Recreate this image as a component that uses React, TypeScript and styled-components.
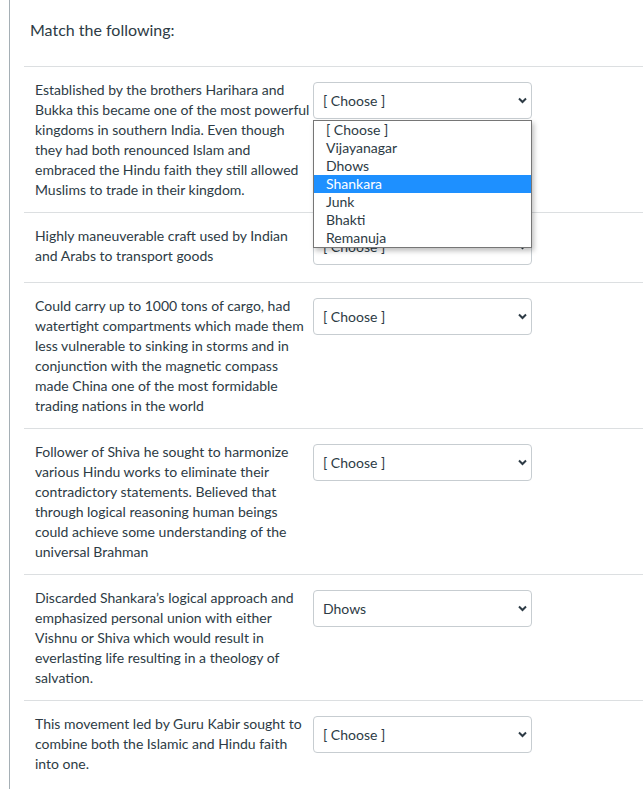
import React from "react";
import styled, { createGlobalStyle } from "styled-components";

const GlobalStyle = createGlobalStyle`
  html, body {
    margin: 0;
    padding: 0;
    background: #fff;
    overflow: hidden;
  }
  body {
    font-family: Lato, "Liberation Sans", sans-serif;
    color: #2d3b45;
  }
`;

const OPTIONS = ["[ Choose ]", "Vijayanagar", "Dhows", "Shankara", "Junk", "Bhakti", "Remanuja"];

interface Item {
  text: string;
  value: string;
  open?: boolean;
}

const ITEMS: Item[] = [
  {
    text: "Established by the brothers Harihara and Bukka this became one of the most powerful kingdoms in southern India. Even though they had both renounced Islam and embraced the Hindu faith they still allowed Muslims to trade in their kingdom.",
    value: "[ Choose ]",
    open: true,
  },
  {
    text: "Highly maneuverable craft used by Indian and Arabs to transport goods",
    value: "[ Choose ]",
  },
  {
    text: "Could carry up to 1000 tons of cargo, had watertight compartments which made them less vulnerable to sinking in storms and in conjunction with the magnetic compass made China one of the most formidable trading nations in the world",
    value: "[ Choose ]",
  },
  {
    text: "Follower of Shiva he sought to harmonize various Hindu works to eliminate their contradictory statements. Believed that through logical reasoning human beings could achieve some understanding of the universal Brahman",
    value: "[ Choose ]",
  },
  {
    text: "Discarded Shankara’s logical approach and emphasized personal union with either Vishnu or Shiva which would result in everlasting life resulting in a theology of salvation.",
    value: "Dhows",
  },
  {
    text: "This movement led by Guru Kabir sought to combine both the Islamic and Hindu faith into one.",
    value: "[ Choose ]",
  },
];

const Page = styled.div`
  margin-left: 9px;
  border-left: 1px solid #a5afb5;
  min-height: 789px;
  box-sizing: border-box;
`;

const Header = styled.div`
  padding: 20px 0 0 20px;
  height: 66px;
  box-sizing: border-box;
`;

const Title = styled.div`
  font-size: 16px;
  line-height: 20px;
  color: #2d3b45;
`;

const List = styled.div`
  margin-left: 14px;
`;

const Row = styled.div`
  display: flex;
  align-items: flex-start;
  border-top: 1px solid #dcdfe1;
  padding: 13px 0 12px 11px;
`;

const Question = styled.div`
  width: 278px;
  flex: none;
  font-size: 14px;
  line-height: 20px;
  color: #2d3b45;
`;

const SelectWrap = styled.div`
  position: relative;
  width: 219px;
  margin-top: 2px;
  margin-bottom: 5px;
`;

const Select = styled.select`
  appearance: none;
  -webkit-appearance: none;
  display: block;
  width: 219px;
  height: 37px;
  box-sizing: border-box;
  border: 1px solid #c7cdd1;
  border-radius: 4px;
  background: #fff;
  padding: 0 28px 0 9px;
  font-family: Lato, "Liberation Sans", sans-serif;
  font-size: 14px;
  color: #2d3b45;
  outline: none;
`;

const Chevron = styled.svg`
  position: absolute;
  right: 5px;
  top: 15px;
  width: 9px;
  height: 7px;
  pointer-events: none;
`;

const Menu = styled.ul`
  position: absolute;
  z-index: 5;
  top: 38px;
  left: 0;
  width: 219px;
  box-sizing: border-box;
  margin: 0;
  padding: 0;
  list-style: none;
  background: #fff;
  border: 1px solid #767676;
  box-shadow: 2px 3px 5px rgba(0, 0, 0, 0.25);
`;

const MenuItem = styled.li<{ $active?: boolean }>`
  height: 18px;
  line-height: 18px;
  padding-left: 12px;
  font-size: 14px;
  background: ${(p) => (p.$active ? "#1e90ff" : "#fff")};
  color: ${(p) => (p.$active ? "#fff" : "#2d3b45")};
`;

const Dropdown: React.FC<{ value: string; open?: boolean }> = ({ value, open }) => (
  <SelectWrap>
    <Select value={value} onChange={() => {}}>
      {OPTIONS.map((o) => (
        <option key={o} value={o}>
          {o}
        </option>
      ))}
    </Select>
    <Chevron viewBox="0 0 9 7">
      <path d="M1 1.5 L4.5 5 L8 1.5" fill="none" stroke="#2d3b45" strokeWidth="2" />
    </Chevron>
    {open && (
      <Menu>
        {OPTIONS.map((o) => (
          <MenuItem key={o} $active={o === "Shankara"}>
            {o}
          </MenuItem>
        ))}
      </Menu>
    )}
  </SelectWrap>
);

export default function App() {
  return (
    <>
      <GlobalStyle />
      <Page>
        <Header>
          <Title>Match the following:</Title>
        </Header>
        <List>
          {ITEMS.map((item, i) => (
            <Row key={i}>
              <Question>{item.text}</Question>
              <Dropdown value={item.value} open={item.open} />
            </Row>
          ))}
        </List>
      </Page>
    </>
  );
}
